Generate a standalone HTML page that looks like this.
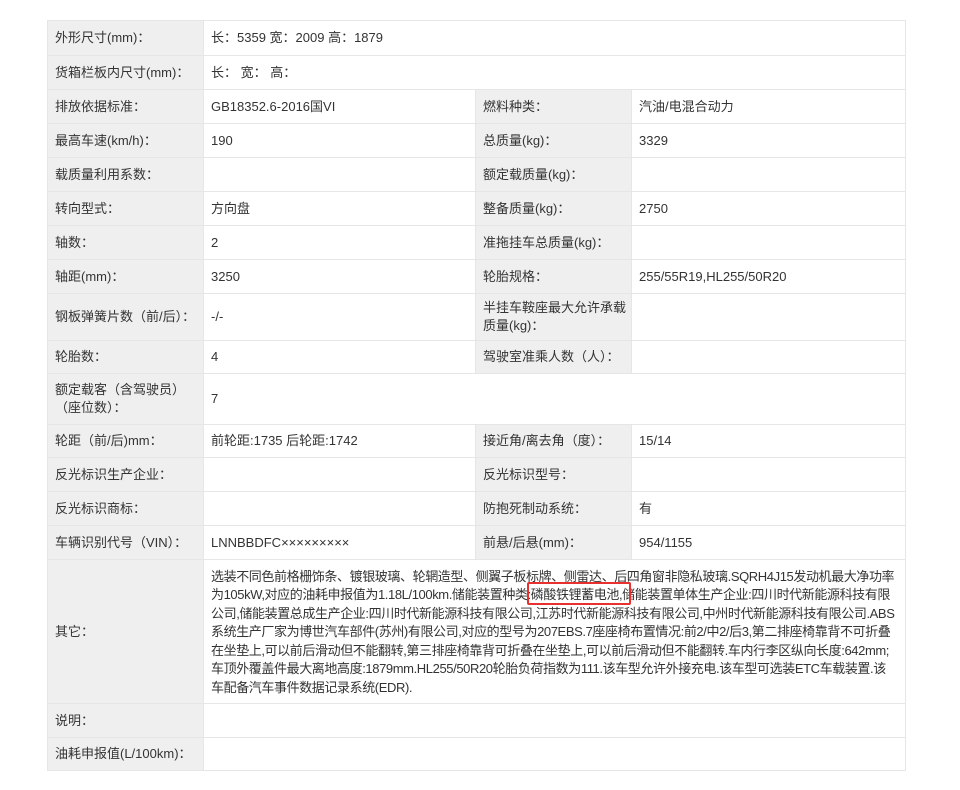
<!DOCTYPE html>
<html><head><meta charset="utf-8"><style>
body{margin:0;background:#fff;width:960px;height:790px;position:relative;overflow:hidden;font-family:"Liberation Sans","Noto Sans CJK SC",sans-serif;font-size:13px;color:#333}
table{position:absolute;left:47px;top:20px;border-collapse:collapse;table-layout:fixed;width:858px}
td{border:1px solid #e6e6e6;padding:0 0 0 7px;vertical-align:middle;line-height:18px;white-space:nowrap}
td.l{background:#efefef}
.o{line-height:18.5px;padding-top:2px;letter-spacing:-0.4px}
#box{position:absolute;left:527px;top:582px;width:100px;height:19px;border:2px solid #e8302e;border-radius:2px}
</style></head><body>
<table>
<colgroup><col style="width:156px"><col style="width:272px"><col style="width:156px"><col style="width:274px"></colgroup>
<tr style="height:35px"><td class="l">外形尺寸(mm)：</td><td colspan="3">长：5359 宽：2009 高：1879</td></tr>
<tr style="height:34px"><td class="l">货箱栏板内尺寸(mm)：</td><td colspan="3">长： 宽： 高：</td></tr>
<tr style="height:34px"><td class="l">排放依据标准：</td><td>GB18352.6-2016国VI</td><td class="l">燃料种类：</td><td>汽油/电混合动力</td></tr>
<tr style="height:34px"><td class="l">最高车速(km/h)：</td><td>190</td><td class="l">总质量(kg)：</td><td>3329</td></tr>
<tr style="height:34px"><td class="l">载质量利用系数：</td><td></td><td class="l">额定载质量(kg)：</td><td></td></tr>
<tr style="height:34px"><td class="l">转向型式：</td><td>方向盘</td><td class="l">整备质量(kg)：</td><td>2750</td></tr>
<tr style="height:34px"><td class="l">轴数：</td><td>2</td><td class="l">准拖挂车总质量(kg)：</td><td></td></tr>
<tr style="height:34px"><td class="l">轴距(mm)：</td><td>3250</td><td class="l">轮胎规格：</td><td>255/55R19,HL255/50R20</td></tr>
<tr style="height:47px"><td class="l">钢板弹簧片数（前/后）：</td><td>-/-</td><td class="l">半挂车鞍座最大允许承载<br>质量(kg)：</td><td></td></tr>
<tr style="height:33px"><td class="l">轮胎数：</td><td>4</td><td class="l">驾驶室准乘人数（人）：</td><td></td></tr>
<tr style="height:51px"><td class="l">额定载客（含驾驶员）<br>（座位数）：</td><td colspan="3">7</td></tr>
<tr style="height:33px"><td class="l">轮距（前/后)mm：</td><td>前轮距:1735 后轮距:1742</td><td class="l">接近角/离去角（度）：</td><td>15/14</td></tr>
<tr style="height:34px"><td class="l">反光标识生产企业：</td><td></td><td class="l">反光标识型号：</td><td></td></tr>
<tr style="height:34px"><td class="l">反光标识商标：</td><td></td><td class="l">防抱死制动系统：</td><td>有</td></tr>
<tr style="height:34px"><td class="l">车辆识别代号（VIN）：</td><td>LNNBBDFC×××××××××</td><td class="l">前悬/后悬(mm)：</td><td>954/1155</td></tr>
<tr style="height:144px"><td class="l">其它：</td><td colspan="3" class="o">选装不同色前格栅饰条、镀银玻璃、轮辋造型、侧翼子板标牌、侧雷达、后四角窗非隐私玻璃.SQRH4J15发动机最大净功率<br>为105kW,对应的油耗申报值为1.18L/100km.储能装置种类:磷酸铁锂蓄电池,储能装置单体生产企业:四川时代新能源科技有限<br>公司,储能装置总成生产企业:四川时代新能源科技有限公司,江苏时代新能源科技有限公司,中州时代新能源科技有限公司.ABS<br>系统生产厂家为博世汽车部件(苏州)有限公司,对应的型号为207EBS.7座座椅布置情况:前2/中2/后3,第二排座椅靠背不可折叠<br>在坐垫上,可以前后滑动但不能翻转,第三排座椅靠背可折叠在坐垫上,可以前后滑动但不能翻转.车内行李区纵向长度:642mm;<br>车顶外覆盖件最大离地高度:1879mm.HL255/50R20轮胎负荷指数为111.该车型允许外接充电.该车型可选装ETC车载装置.该<br>车配备汽车事件数据记录系统(EDR).</td></tr>
<tr style="height:34px"><td class="l">说明：</td><td colspan="3"></td></tr>
<tr style="height:33px"><td class="l">油耗申报值(L/100km)：</td><td colspan="3"></td></tr>
</table>
<div id="box"></div>
</body></html>
